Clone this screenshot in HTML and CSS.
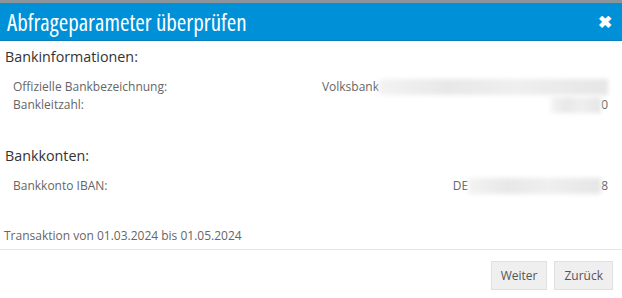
FILE: index.html
```html
<!DOCTYPE html>
<html lang="de">
<head>
    <meta charset="UTF-8">
    <title>Abfrageparameter überprüfen</title>
    <link rel="stylesheet" href="styles.css">
</head>
<body>
    <div class="topline"></div>
    <div class="dialog">
        <header class="dialog-header">
            <h1>Abfrageparameter überprüfen</h1>
            <span class="close">&#10006;</span>
        </header>

        <div class="dialog-body">
            <h2>Bankinformationen:</h2>
            <table class="params">
                <tr>
                    <td class="label">Offizielle Bankbezeichnung:</td>
                    <td class="value">Volksbank<span class="masked w-name"></span></td>
                </tr>
                <tr>
                    <td class="label">Bankleitzahl:</td>
                    <td class="value"><span class="masked w-blz"></span>0</td>
                </tr>
            </table>

            <h2 class="second">Bankkonten:</h2>
            <table class="params">
                <tr>
                    <td class="label">Bankkonto IBAN:</td>
                    <td class="value">DE<span class="masked w-iban"></span>8</td>
                </tr>
            </table>

            <p class="range">Transaktion von 01.03.2024 bis 01.05.2024</p>
        </div>

        <footer class="dialog-footer">
            <button class="btn">Weiter</button>
            <button class="btn">Zurück</button>
        </footer>
    </div>
</body>
</html>
```

FILE: styles.css
```css
* {
    box-sizing: border-box;
    margin: 0;
    padding: 0;
}

body {
    font-family: 'Open Sans', 'Noto Sans', sans-serif;
    background-color: #fff;
    width: 622px;
    height: 298px;
    overflow: hidden;
}

.topline {
    height: 3px;
    background-color: #8d959c;
}

.dialog-header {
    display: flex;
    align-items: center;
    justify-content: space-between;
    height: 37px;
    padding: 0 10px 0 7px;
    background-color: #0090d7;
    color: #fff;
}

.dialog-header h1 {
    font-size: 23px;
    font-weight: 400;
    font-stretch: 78%;
}

.close {
    font-size: 17px;
    font-weight: bold;
    line-height: 1;
}

.dialog-body {
    padding: 6px 14px 0 4px;
    border-top: 1px solid #0b7fbd;
}

.dialog-body h2 {
    font-size: 14.3px;
    font-weight: 400;
    color: #333;
    margin-bottom: 12px;
    margin-left: 1px;
}

.dialog-body h2.second {
    margin-top: 32px;
}

.params {
    width: 100%;
    border-collapse: collapse;
    font-size: 12px;
    color: #666;
}

.params td {
    height: 18px;
    line-height: 18px;
    padding: 0;
}

.params .label {
    padding-left: 9px;
}

.params .value {
    text-align: right;
}

.masked {
    display: inline-block;
    height: 16px;
    vertical-align: -4px;
    background: linear-gradient(90deg, #f3f3f3, #e8e8e8 30%, #efefef 60%, #e6e6e6);
    filter: blur(2px);
}

.w-name { width: 229px; }
.w-blz { width: 50px; }
.w-iban { width: 133px; }

.range {
    font-size: 12px;
    color: #666;
    margin-top: 32px;
    margin-bottom: 5px;
}

.dialog-footer {
    display: flex;
    justify-content: flex-end;
    gap: 7px;
    padding: 11px 9px 0 0;
    border-top: 1px solid #e6e6e6;
}

.btn {
    font-family: 'Open Sans', 'Noto Sans', sans-serif;
    font-size: 12px;
    color: #555;
    background-color: #efefef;
    border: 1px solid #e0e0e0;
    height: 29px;
    padding: 0 9px;
}
```
